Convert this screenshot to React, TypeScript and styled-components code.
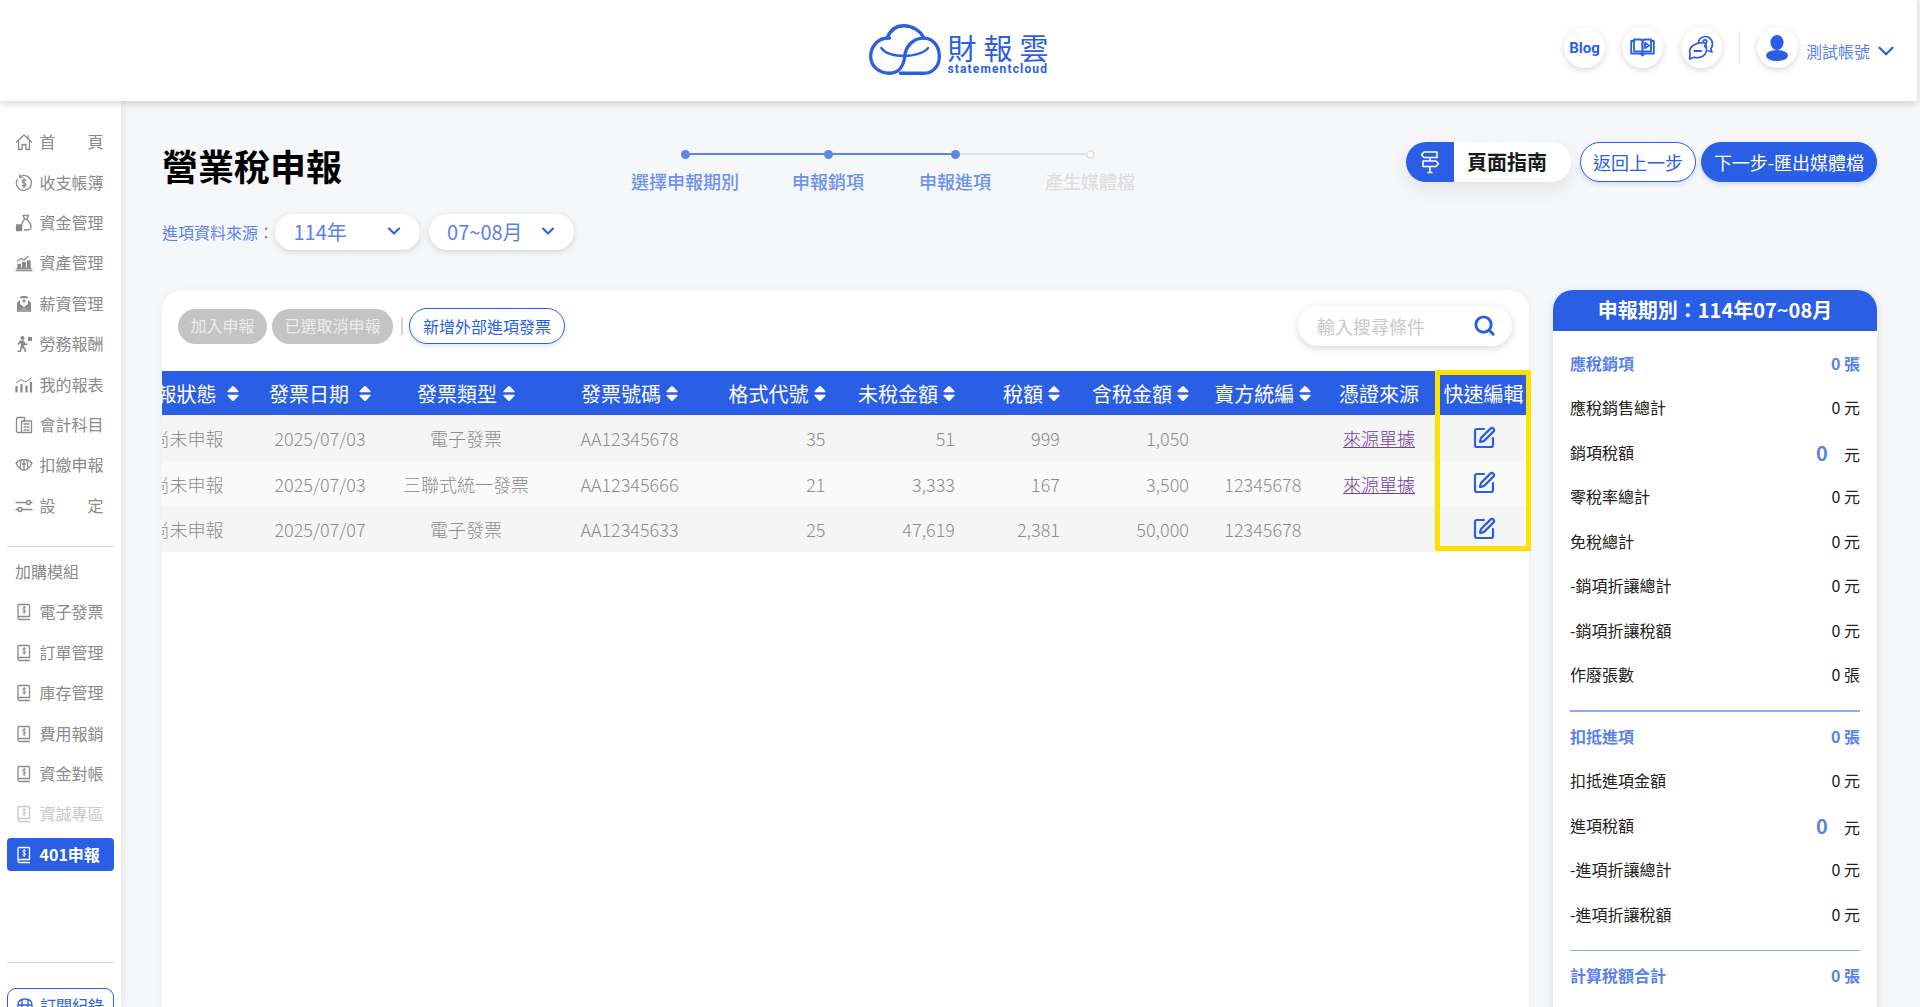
import React from "react";
import styled, { createGlobalStyle } from "styled-components";
import { ChevronDown, SquarePen, Search } from "lucide-react";

const BLUE = "#2a5ee4";
const SOFT = "#5b82ea";
const GREY = "#8a8a8a";

const Global = createGlobalStyle`
  html, body { margin: 0; padding: 0; height: 100%; overflow: hidden; background: #f6f7f9; }
  body { font-family: "Noto Sans CJK TC", "Noto Sans", sans-serif; color: #222; }
  * { box-sizing: border-box; }
`;

const Page = styled.div`
  height: 1007px;
  display: flex;
  flex-direction: column;
  overflow: hidden;
`;

/* ---------- header ---------- */
const Header = styled.header`
  flex: none;
  height: 101px;
  width: calc(100% - 3px);
  background: #fff;
  box-shadow: 0 2px 8px rgba(0, 0, 0, 0.18);
  display: grid;
  grid-template-columns: 1fr auto 1fr;
  align-items: center;
  position: relative;
  z-index: 3;
`;
const Logo = styled.div`
  display: flex;
  align-items: flex-start;
  gap: 7px;
  padding-bottom: 1px;
`;
const LogoWords = styled.div`
  display: flex;
  flex-direction: column;
  align-items: flex-start;
  width: 101px;
  padding-top: 8px;
`;
const LogoName = styled.div`
  font-size: 29px;
  line-height: 30px;
  height: 30px;
  letter-spacing: 7px;
  color: ${BLUE};
  white-space: nowrap;
`;
const LogoSub = styled.div`
  font-family: "Roboto", sans-serif;
  font-weight: 700;
  font-size: 12px;
  line-height: 13px;
  margin-top: 1px;
  letter-spacing: 1.15px;
  color: ${BLUE};
  white-space: nowrap;
`;
const HeaderTools = styled.div`
  grid-column: 3;
  display: flex;
  justify-content: flex-end;
  align-items: center;
  gap: 17.5px;
  padding: 0 18px 6px 0;
`;
const RoundButton = styled.div`
  width: 41px;
  height: 41px;
  border-radius: 50%;
  background: #fff;
  box-shadow: 0 2px 6px rgba(0, 0, 0, 0.16);
  display: flex;
  align-items: center;
  justify-content: center;
  color: ${BLUE};
  font-family: "Roboto", sans-serif;
  font-weight: 700;
  font-size: 15px;
`;
const ToolDivider = styled.div`
  width: 1px;
  height: 33px;
  background: #e6e6e6;
  margin: 0 -0.5px;
`;
const UserMenu = styled.div`
  display: flex;
  align-items: center;
  gap: 8px;
`;
const UserName = styled.div`
  display: flex;
  align-items: center;
  gap: 3px;
  padding-top: 7px;
  font-size: 16px;
  color: ${SOFT};
  white-space: nowrap;
`;

/* ---------- body ---------- */
const Body = styled.div`
  flex: 1;
  min-height: 0;
  display: flex;
`;

/* ---------- sidebar ---------- */
const Sidebar = styled.aside`
  flex: none;
  width: 121px;
  background: #fff;
  box-shadow: 2px 0 8px rgba(0, 0, 0, 0.08);
  padding: 21px 7px 0;
  display: flex;
  flex-direction: column;
  overflow: hidden;
  position: relative;
  z-index: 2;
`;
const NavItem = styled.div<{ $active?: boolean; $muted?: boolean }>`
  flex: none;
  height: ${(p) => (p.$active ? "33px" : "40.4px")};
  margin: ${(p) => (p.$active ? "3.7px 0" : "0")};
  padding-left: 8px;
  display: flex;
  align-items: center;
  gap: 6.5px;
  border-radius: 4px;
  font-size: 16px;
  font-weight: ${(p) => (p.$active ? 700 : 400)};
  background: ${(p) => (p.$active ? BLUE : "transparent")};
  color: ${(p) => (p.$active ? "#fff" : p.$muted ? "#c9c9c9" : GREY)};
  white-space: nowrap;
`;
const NavIcon = styled.span`
  flex: none;
  width: 18px;
  height: 18px;
  display: flex;
`;
const NavLabel = styled.span<{ $spread?: boolean }>`
  width: 64px;
  padding-bottom: 2px;
  display: flex;
  justify-content: ${(p) => (p.$spread ? "space-between" : "flex-start")};
`;
const SideDivider = styled.div<{ $top: number }>`
  flex: none;
  height: 1px;
  background: #d8d8d8;
  margin-top: ${(p) => p.$top}px;
`;
const SideHeading = styled.div`
  flex: none;
  height: 40.4px;
  margin-top: 5px;
  padding: 0 0 2px 8px;
  display: flex;
  align-items: center;
  font-size: 16px;
  color: ${GREY};
`;
const SubscribeButton = styled.div`
  flex: none;
  margin-top: 25px;
  height: 34px;
  border: 1.5px solid ${BLUE};
  border-radius: 9px;
  padding-left: 8px;
  display: flex;
  align-items: center;
  gap: 6px;
  font-size: 16px;
  color: ${BLUE};
  white-space: nowrap;
`;

/* ---------- main ---------- */
const Main = styled.main`
  flex: 1;
  min-width: 0;
  padding: 40px 43px 0 41px;
  display: flex;
  flex-direction: column;
`;
const TopBar = styled.div`
  flex: none;
  height: 109px;
  display: flex;
  align-items: flex-start;
`;
const TitleBlock = styled.div`
  flex: none;
  width: 450px;
`;
const Title = styled.h1`
  margin: -1px 0 24px;
  font-size: 36px;
  line-height: 50px;
  font-weight: 700;
  color: #000;
`;
const SourceRow = styled.div`
  display: flex;
  align-items: center;
`;
const SourceLabel = styled.span`
  width: 113px;
  font-size: 16px;
  color: ${SOFT};
  white-space: nowrap;
`;
const Select = styled.div`
  width: 145px;
  height: 36px;
  margin-right: 8.6px;
  border-radius: 18px;
  background: #fff;
  box-shadow: 0 2px 6px rgba(0, 0, 0, 0.14);
  display: flex;
  align-items: center;
  justify-content: space-between;
  padding: 0 16px 2px 18.5px;
  font-size: 20px;
  color: ${SOFT};
  white-space: nowrap;
`;
const Stepper = styled.div`
  flex: none;
  display: flex;
  padding-top: 8px;
`;
const Step = styled.div<{ $w: number; $on: boolean }>`
  width: ${(p) => p.$w}px;
  display: flex;
  flex-direction: column;
  align-items: center;
  color: ${(p) => (p.$on ? "#6e91ec" : "#dedede")};
  font-size: 18px;
  font-weight: 500;
  line-height: 26px;
  white-space: nowrap;
`;
const StepTrack = styled.div`
  width: 100%;
  height: 10px;
  display: flex;
  align-items: center;
  margin-bottom: 9px;
`;
const StepLine = styled.div<{ $tone: "on" | "off" | "none" }>`
  flex: 1;
  height: 2.5px;
  background: ${(p) => (p.$tone === "on" ? "#5f86e6" : p.$tone === "off" ? "#e2e2e2" : "transparent")};
`;
const StepDot = styled.div<{ $on: boolean }>`
  flex: none;
  width: 9px;
  height: 9px;
  border-radius: 50%;
  background: ${(p) => (p.$on ? "#5f86e6" : "#fff")};
  border: ${(p) => (p.$on ? "none" : "2px solid #e2e2e2")};
`;
const Actions = styled.div`
  margin-left: auto;
  display: flex;
  gap: 5px;
  padding-top: 1px;
`;
const GuideButton = styled.div`
  width: 165px;
  height: 40px;
  margin-right: 4px;
  border-radius: 20px;
  background: #fff;
  box-shadow: 0 8px 18px rgba(0, 0, 0, 0.08);
  overflow: hidden;
  display: flex;
  align-items: center;
  padding-bottom: 1px;
  font-size: 20px;
  font-weight: 700;
  color: #1a1a1a;
`;
const GuideIcon = styled.span`
  flex: none;
  width: 48px;
  height: 40px;
  background: ${BLUE};
  display: flex;
  align-items: center;
  justify-content: center;
  margin: 0 13px 0 0;
`;
const ActionButton = styled.div<{ $primary?: boolean; $w: number }>`
  width: ${(p) => p.$w}px;
  height: 40px;
  border-radius: 20px;
  border: 1.5px solid ${BLUE};
  background: ${(p) => (p.$primary ? BLUE : "#fff")};
  color: ${(p) => (p.$primary ? "#fff" : BLUE)};
  box-shadow: 0 2px 5px rgba(42, 94, 228, 0.2);
  display: flex;
  align-items: center;
  justify-content: center;
  font-size: 18px;
  white-space: nowrap;
`;

/* ---------- content ---------- */
const Content = styled.div`
  flex: 1;
  min-height: 0;
  margin-top: 40px;
  display: flex;
  gap: 24px;
`;
const Card = styled.section`
  flex: none;
  width: 1367px;
  height: 800px;
  background: #fff;
  border-radius: 20px 20px 0 0;
  box-shadow: 0 0 6px rgba(0, 0, 0, 0.05);
  position: relative;
`;
const Toolbar = styled.div`
  height: 81px;
  padding: 16px 17px 25px 16px;
  display: flex;
  align-items: center;
  gap: 5px;
`;
const GreyPill = styled.div`
  height: 35px;
  padding: 0 12.5px 2px;
  border-radius: 18px;
  background: #c4c4c4;
  color: #ececec;
  font-size: 16px;
  display: flex;
  align-items: center;
  white-space: nowrap;
`;
const ToolSep = styled.div`
  width: 2px;
  height: 18px;
  background: #d2d2d2;
  margin: 0 1px 0 3px;
`;
const OutlinePill = styled.div`
  height: 36px;
  width: 156px;
  border-radius: 18px;
  border: 1.5px solid ${BLUE};
  background: #fff;
  color: ${BLUE};
  font-size: 16px;
  display: flex;
  align-items: center;
  justify-content: center;
  white-space: nowrap;
  box-shadow: 0 2px 4px rgba(42, 94, 228, 0.16);
`;
const SearchBox = styled.div`
  margin-left: auto;
  width: 214px;
  height: 40px;
  border-radius: 20px;
  background: #fff;
  box-shadow: 0 2px 7px rgba(0, 0, 0, 0.16);
  display: flex;
  align-items: center;
  justify-content: space-between;
  padding: 0 16px 1px 19px;
  font-size: 18px;
  color: #c8c8c8;
`;
const TableClip = styled.div`
  overflow: hidden;
`;
const Table = styled.table`
  width: 1409.6px;
  margin-left: -42px;
  table-layout: fixed;
  border-collapse: collapse;
`;
const Col = styled.col<{ $w: number }>`
  width: ${(p) => p.$w}px;
`;
const HeadRow = styled.tr`
  height: 44px;
  background: ${BLUE};
`;
const Th = styled.th<{ $align: string }>`
  padding: ${(p) => (p.$align === "right" ? "0 16px 0 0" : "0")};
  font-size: 20px;
  font-weight: 400;
  color: #fff;
  white-space: nowrap;
`;
const ThInner = styled.span<{ $align: string }>`
  display: flex;
  align-items: center;
  justify-content: ${(p) => (p.$align === "right" ? "flex-end" : "center")};
`;
const SortMark = styled.svg<{ $gap: number }>`
  flex: none;
  width: 12px;
  height: 17px;
  margin-left: ${(p) => p.$gap}px;
`;
const Row = styled.tr<{ $odd: boolean }>`
  height: 45.6px;
  background: ${(p) => (p.$odd ? "#f5f5f5" : "#fafafa")};
`;
const Td = styled.td<{ $align: string }>`
  padding: ${(p) => (p.$align === "right" ? "1px 16px 0 0" : "1px 0 0")};
  text-align: ${(p) => p.$align};
  font-size: 18px;
  font-weight: 300;
  color: #8c8c8c;
  white-space: nowrap;
`;
const SourceLink = styled.a`
  color: #74409f;
  text-decoration: underline;
`;
const EditCell = styled.span`
  display: flex;
  justify-content: center;
  color: ${BLUE};
  margin: 0 0 1px 1px;
`;
const Highlight = styled.div`
  position: absolute;
  left: 1273px;
  top: 80px;
  width: 96px;
  height: 181px;
  border: 5px solid #ffe100;
  pointer-events: none;
`;

/* ---------- summary panel ---------- */
const Panel = styled.aside`
  flex: none;
  width: 324px;
  height: 800px;
  background: #fff;
  border-radius: 20px 20px 0 0;
  box-shadow: 0 2px 8px rgba(0, 0, 0, 0.12);
  overflow: hidden;
`;
const PanelTitle = styled.div`
  height: 40.5px;
  padding-bottom: 2px;
  background: ${BLUE};
  color: #fff;
  font-size: 20px;
  font-weight: 700;
  display: flex;
  align-items: center;
  justify-content: center;
  white-space: nowrap;
`;
const PanelBody = styled.div`
  padding: 10px 17px 0;
`;
const SumRow = styled.div<{ $head?: boolean }>`
  height: 44.5px;
  display: flex;
  align-items: center;
  justify-content: space-between;
  font-size: 16px;
  font-weight: ${(p) => (p.$head ? 700 : 400)};
  color: ${(p) => (p.$head ? SOFT : "#222")};
  white-space: nowrap;
`;
const BigValue = styled.span`
  display: flex;
  align-items: center;
  gap: 6px;
`;
const BigNumber = styled.span`
  font-size: 20px;
  font-weight: 700;
  padding-top: 2px;
  color: ${SOFT};
  width: 22px;
`;
const Unit = styled.span`
  padding-top: 5px;
`;
const PanelDivider = styled.div`
  height: 1.5px;
  background: #8fabef;
  margin: 13.5px 0 2px;
`;

/* ---------- drawings ---------- */
const CloudLogo = () => (
  <svg width="72" height="51" viewBox="0 0 217 153" fill="none" stroke={BLUE} strokeWidth="10" strokeLinecap="round">
    <path d="M62 42C25 40 5 70 5 97C5 128 30 148 62 148C90 148 105 125 108 95C110 70 130 42 165 42" />
    <path d="M165 42C195 42 212 70 212 97C212 130 190 148 165 148H95" />
    <path d="M55 42C65 15 85 5 105 5C130 5 155 20 165 42" />
    <path d="M37 72C50 90 80 96 108 96C135 96 165 88 178 72" strokeWidth="7" />
  </svg>
);
const BookPlay = () => (
  <svg width="25" height="19" viewBox="0 0 25 19" fill="none" stroke={BLUE} strokeWidth="1.8" strokeLinejoin="round">
    <path d="M4 3H1.2V15.5H10.5L12.5 17.5L14.5 15.5H23.8V3H21" />
    <path d="M4 1.5H10C11.5 1.5 12.5 2.3 12.5 3.5V15C12.5 14 11.5 13.3 10 13.3H4Z" />
    <path d="M21 1.5H15C13.5 1.5 12.5 2.3 12.5 3.5V15C12.5 14 13.5 13.3 15 13.3H21Z" />
    <path d="M15 4.8L19 7.5L15 10.2Z" />
  </svg>
);
const ChatHelp = () => (
  <svg width="26" height="26" viewBox="0 0 26 26" fill="none" stroke={BLUE} strokeWidth="1.7" strokeLinejoin="round" strokeLinecap="round">
    <path d="M10 9.5C10 4.8 13 1.5 17 1.5C21.2 1.5 24.5 4.8 24.5 9C24.5 11 23.8 12.6 22.8 13.8L24 17L20 15.8" />
    <path d="M17.5 8C14.5 7.6 8.5 7.8 5 10.5C2 12.8 1 16 2.2 19L1.5 24L6 22.3C9.5 23.4 14.5 22.5 16.8 19.5C18.8 16.8 18.8 12 17.5 8Z" fill="#fff" />
    <path d="M6.5 16H13" strokeWidth="2" />
    <path d="M15.2 6.5C15.2 5.4 16 4.8 17 4.8C18 4.8 18.8 5.5 18.8 6.4C18.8 7.6 17.2 7.8 17.2 9.2" />
    <circle cx="17.2" cy="11.4" r="0.5" fill={BLUE} />
  </svg>
);
const Avatar = () => (
  <svg width="24" height="26" viewBox="0 0 24 26" fill={BLUE}>
    <ellipse cx="12" cy="7.5" rx="6.6" ry="7.5" />
    <ellipse cx="12" cy="20.5" rx="11" ry="5.5" />
  </svg>
);
const Signpost = () => (
  <svg width="20" height="24" viewBox="0 0 20 24" fill="none" stroke="#fff" strokeWidth="1.6" strokeLinejoin="round">
    <path d="M4 2H17V7.5H4L1.5 4.8Z" />
    <path d="M3 11H16L18.5 13.8L16 16.5H3Z" />
    <path d="M10 7.5V11M10 16.5V22.5" />
    <path d="M7.5 22.5H12.5" />
  </svg>
);
const Sort = ({ gap }: { gap: number }) => (
  <SortMark $gap={gap} viewBox="0 0 12 16" fill="#fff">
    <path d="M5.2 0.8Q6 0 6.8 0.8L11.4 5.6Q12 6.6 10.8 6.8H1.2Q0 6.6 0.6 5.6Z" />
    <path d="M5.2 15.2Q6 16 6.8 15.2L11.4 10.4Q12 9.4 10.8 9.2H1.2Q0 9.4 0.6 10.4Z" />
  </SortMark>
);

const icon = (children: React.ReactNode) => (
  <svg width="18" height="18" viewBox="0 0 18 18" fill="none" stroke="currentColor" strokeWidth="1.3" strokeLinejoin="round" strokeLinecap="round">
    {children}
  </svg>
);
const navIcons: Record<string, React.ReactNode> = {
  home: icon(<><path d="M1.5 9L9 2L16.5 9" /><path d="M13 3V6" /><path d="M3.5 8V16.5H7V11.5H11V16.5H14.5V8" /></>),
  cash: icon(<><path d="M4.5 2.8A7.5 7.5 0 1 1 2.2 5.5" /><path d="M4.8 0.8V3.4H7.4" /><path d="M11 6.5C10.5 5.6 7.2 5.4 7.2 7.5C7.2 9.6 11 8.6 11 10.8C11 12.8 7.6 12.6 7 11.5M9 4.5V13.8" /></>),
  fund: icon(<><path d="M8 1.5H13.5L11.8 5.2H9.6Z" /><path d="M9.6 5.2C7.5 7.5 6.5 9.5 6.8 11.5M11.8 5.2C14.5 8 16.5 11 16 13.5C15.7 15.2 14.2 16 12.5 16H9.5" /><path d="M1.5 11H6.5V16.5H1.5Z" fill="currentColor" /></>),
  asset: icon(<><path d="M1 16.5H17M2 14.5H16" /><path d="M3 14V10.5H5.5V14M7.7 14V8.5H10.2V14M12.5 14V7H15V14" fill="currentColor" /><path d="M2.5 7L6 4.5L9 6L13 2.5" /></>),
  payroll: (
    <svg width="18" height="18" viewBox="0 0 18 18" fill="currentColor">
      <path d="M2 7.5L5 5V3C5 1.8 6 1 7 1H11C12 1 13 1.8 13 3V5L16 7.5V17H2Z" />
      <path d="M5 3.2H13V9L9 12L5 9Z" fill="#fff" />
      <circle cx="9" cy="6" r="1.6" />
      <path d="M2 17L9 11L16 17" fill="#fff" fillOpacity="0.2" />
    </svg>
  ),
  labor: (
    <svg width="18" height="18" viewBox="0 0 18 18" fill="currentColor">
      <circle cx="7.5" cy="3" r="2" />
      <path d="M5 5.5H9L10.5 8.5H12.5V10H9.5L9 12L11 14V17H9.5V14.8L7 13L6 17H2.5V15.5H4.8L6 9.5L5 8L3.5 10L2.3 9.2Z" />
      <path d="M13 2H17V6H13Z" />
    </svg>
  ),
  report: (
    <svg width="18" height="18" viewBox="0 0 18 18" fill="currentColor" stroke="currentColor" strokeWidth="1">
      <path d="M1.5 10V16.5M6.5 8V16.5M11.5 9.5V16.5M16 6V16.5" strokeWidth="2.2" />
      <path d="M1 7L6 3.5L11 6L16.5 1.5" fill="none" />
    </svg>
  ),
  account: icon(<><path d="M1.5 3.5C1.5 2.2 2.5 1.5 3.5 1.5H9.5V5" /><path d="M1.5 3.5V15C1.5 16 2.3 16.5 3.2 16.5H6.5" /><path d="M6.5 5H16.5V16.5H6.5Z" /><path d="M9 8H14M9 11H11M12.5 11H14M9 14H11M12.5 14H14" /></>),
  tax: icon(<><path d="M1 7.5C4 4 7 3.5 9 3.5C11 3.5 14 4 17 7.5C15 11 12 14 9 14C6 14 3 11 1 7.5Z" /><path d="M6 5L5 12M9 4V14M12 5L13 12" /><path d="M7.5 8H10.5" /></>),
  setting: icon(<><path d="M1 5.5H11.5M15.5 5.5H17M1 12.5H3M7 12.5H17" /><circle cx="13.5" cy="5.5" r="2" /><circle cx="5" cy="12.5" r="2" /></>),
  module: icon(<><path d="M3 14.2V2.5C3 1.9 3.4 1.5 4 1.5H13.5C14.1 1.5 14.5 1.9 14.5 2.5V13.5H4.5C3.5 13.5 3 14.2 3 15C3 15.9 3.6 16.5 4.5 16.5H14.5" /><path d="M10.5 4.6C10 4 7.8 4 7.8 5.6C7.8 7.2 10.6 6.6 10.6 8.2C10.6 9.6 8.4 9.6 7.6 8.8M9.2 3.2V10.6" strokeWidth="1" /></>),
};

/* ---------- data ---------- */
const mainNav = [
  ["home", "首", "頁"],
  ["cash", "收支帳簿"],
  ["fund", "資金管理"],
  ["asset", "資產管理"],
  ["payroll", "薪資管理"],
  ["labor", "勞務報酬"],
  ["report", "我的報表"],
  ["account", "會計科目"],
  ["tax", "扣繳申報"],
  ["setting", "設", "定"],
];
const modules = ["電子發票", "訂單管理", "庫存管理", "費用報銷", "資金對帳"];
const colWidths = [135, 130, 162, 165, 129.5, 129.5, 105, 129, 115.6, 117, 92];
const headers: [string, string, number | null][] = [
  ["申報狀態", "center", 10],
  ["發票日期", "center", 10],
  ["發票類型", "center", 6],
  ["發票號碼", "center", 5],
  ["格式代號", "right", 5],
  ["未稅金額", "right", 5],
  ["稅額", "right", 5],
  ["含稅金額", "right", 5],
  ["賣方統編", "center", 5],
  ["憑證來源", "center", null],
  ["快速編輯", "center", null],
];
const aligns = ["center", "center", "center", "center", "right", "right", "right", "right", "center"];
const rows = [
  ["尚未申報", "2025/07/03", "電子發票", "AA12345678", "35", "51", "999", "1,050", "", true],
  ["尚未申報", "2025/07/03", "三聯式統一發票", "AA12345666", "21", "3,333", "167", "3,500", "12345678", true],
  ["尚未申報", "2025/07/07", "電子發票", "AA12345633", "25", "47,619", "2,381", "50,000", "12345678", false],
] as const;
const steps = [
  { w: 146, label: "選擇申報期別", on: true, left: "none", right: "on" },
  { w: 140, label: "申報銷項", on: true, left: "on", right: "on" },
  { w: 114, label: "申報進項", on: true, left: "on", right: "off" },
  { w: 156, label: "產生媒體檔", on: false, left: "off", right: "none" },
] as const;

const SumGroup = ({ head, unit, items }: { head: string; unit: string; items: [string, string, boolean?][] }) => (
  <>
    <SumRow $head>
      <span>{head}</span>
      <span>0 {unit}</span>
    </SumRow>
    {items.map(([label, u, big]) => (
      <SumRow key={label}>
        <span>{label}</span>
        {big ? (
          <BigValue>
            <BigNumber>0</BigNumber>
            <Unit>{u}</Unit>
          </BigValue>
        ) : (
          <span>0 {u}</span>
        )}
      </SumRow>
    ))}
  </>
);

export default function App() {
  return (
    <Page>
      <Global />
      <Header>
        <span />
        <Logo>
          <CloudLogo />
          <LogoWords>
            <LogoName>財報雲</LogoName>
            <LogoSub>statementcloud</LogoSub>
          </LogoWords>
        </Logo>
        <HeaderTools>
          <RoundButton>Blog</RoundButton>
          <RoundButton><BookPlay /></RoundButton>
          <RoundButton><ChatHelp /></RoundButton>
          <ToolDivider />
          <UserMenu>
            <RoundButton><Avatar /></RoundButton>
            <UserName>
              測試帳號
              <ChevronDown size={26} strokeWidth={2} color={BLUE} />
            </UserName>
          </UserMenu>
        </HeaderTools>
      </Header>
      <Body>
        <Sidebar>
          {mainNav.map(([key, a, b]) => (
            <NavItem key={key}>
              <NavIcon>{navIcons[key]}</NavIcon>
              <NavLabel $spread={!!b}>
                <span>{a}</span>
                {b && <span>{b}</span>}
              </NavLabel>
            </NavItem>
          ))}
          <SideDivider $top={20} />
          <SideHeading>加購模組</SideHeading>
          {modules.map((m) => (
            <NavItem key={m}>
              <NavIcon>{navIcons.module}</NavIcon>
              <NavLabel>{m}</NavLabel>
            </NavItem>
          ))}
          <NavItem $muted>
            <NavIcon>{navIcons.module}</NavIcon>
            <NavLabel>資誠專區</NavLabel>
          </NavItem>
          <NavItem $active>
            <NavIcon>{navIcons.module}</NavIcon>
            <NavLabel>401申報</NavLabel>
          </NavItem>
          <SideDivider $top={87} />
          <SubscribeButton>
            <svg width="18" height="18" viewBox="0 0 18 18" fill="none" stroke={BLUE} strokeWidth="1.3">
              <path d="M2 9C2 5 5 3 9 3C13 3 16 5 16 9V15H2ZM2 9H16M6 3.5V15M12 3.5V15" />
            </svg>
            訂閱紀錄
          </SubscribeButton>
        </Sidebar>
        <Main>
          <TopBar>
            <TitleBlock>
              <Title>營業稅申報</Title>
              <SourceRow>
                <SourceLabel>進項資料來源：</SourceLabel>
                <Select>
                  114年
                  <ChevronDown size={20} strokeWidth={2.5} color={BLUE} />
                </Select>
                <Select>
                  07~08月
                  <ChevronDown size={20} strokeWidth={2.5} color={BLUE} />
                </Select>
              </SourceRow>
            </TitleBlock>
            <Stepper>
              {steps.map((s) => (
                <Step key={s.label} $w={s.w} $on={s.on}>
                  <StepTrack>
                    <StepLine $tone={s.left} />
                    <StepDot $on={s.on} />
                    <StepLine $tone={s.right} />
                  </StepTrack>
                  {s.label}
                </Step>
              ))}
            </Stepper>
            <Actions>
              <GuideButton>
                <GuideIcon><Signpost /></GuideIcon>
                頁面指南
              </GuideButton>
              <ActionButton $w={116}>返回上一步</ActionButton>
              <ActionButton $primary $w={176}>下一步-匯出媒體檔</ActionButton>
            </Actions>
          </TopBar>
          <Content>
            <Card>
              <Toolbar>
                <GreyPill>加入申報</GreyPill>
                <GreyPill>已選取消申報</GreyPill>
                <ToolSep />
                <OutlinePill>新增外部進項發票</OutlinePill>
                <SearchBox>
                  輸入搜尋條件
                  <Search size={23} strokeWidth={3} color={BLUE} />
                </SearchBox>
              </Toolbar>
              <TableClip>
                <Table>
                  <colgroup>
                    {colWidths.map((w, i) => (
                      <Col key={i} $w={w} />
                    ))}
                  </colgroup>
                  <thead>
                    <HeadRow>
                      {headers.map(([label, align, gap]) => (
                        <Th key={label} $align={align}>
                          <ThInner $align={align}>
                            {label}
                            {gap !== null && <Sort gap={gap} />}
                          </ThInner>
                        </Th>
                      ))}
                    </HeadRow>
                  </thead>
                  <tbody>
                    {rows.map((r, i) => (
                      <Row key={r[3]} $odd={i % 2 === 0}>
                        {aligns.map((a, c) => (
                          <Td key={c} $align={a}>{r[c] as string}</Td>
                        ))}
                        <Td $align="center">{r[9] && <SourceLink href="#">來源單據</SourceLink>}</Td>
                        <Td $align="center">
                          <EditCell><SquarePen size={24} strokeWidth={2.2} /></EditCell>
                        </Td>
                      </Row>
                    ))}
                  </tbody>
                </Table>
              </TableClip>
              <Highlight />
            </Card>
            <Panel>
              <PanelTitle>申報期別：114年07~08月</PanelTitle>
              <PanelBody>
                <SumGroup
                  head="應稅銷項"
                  unit="張"
                  items={[
                    ["應稅銷售總計", "元"],
                    ["銷項稅額", "元", true],
                    ["零稅率總計", "元"],
                    ["免稅總計", "元"],
                    ["-銷項折讓總計", "元"],
                    ["-銷項折讓稅額", "元"],
                    ["作廢張數", "張"],
                  ]}
                />
                <PanelDivider />
                <SumGroup
                  head="扣抵進項"
                  unit="張"
                  items={[
                    ["扣抵進項金額", "元"],
                    ["進項稅額", "元", true],
                    ["-進項折讓總計", "元"],
                    ["-進項折讓稅額", "元"],
                  ]}
                />
                <PanelDivider />
                <SumGroup head="計算稅額合計" unit="張" items={[]} />
              </PanelBody>
            </Panel>
          </Content>
        </Main>
      </Body>
    </Page>
  );
}
